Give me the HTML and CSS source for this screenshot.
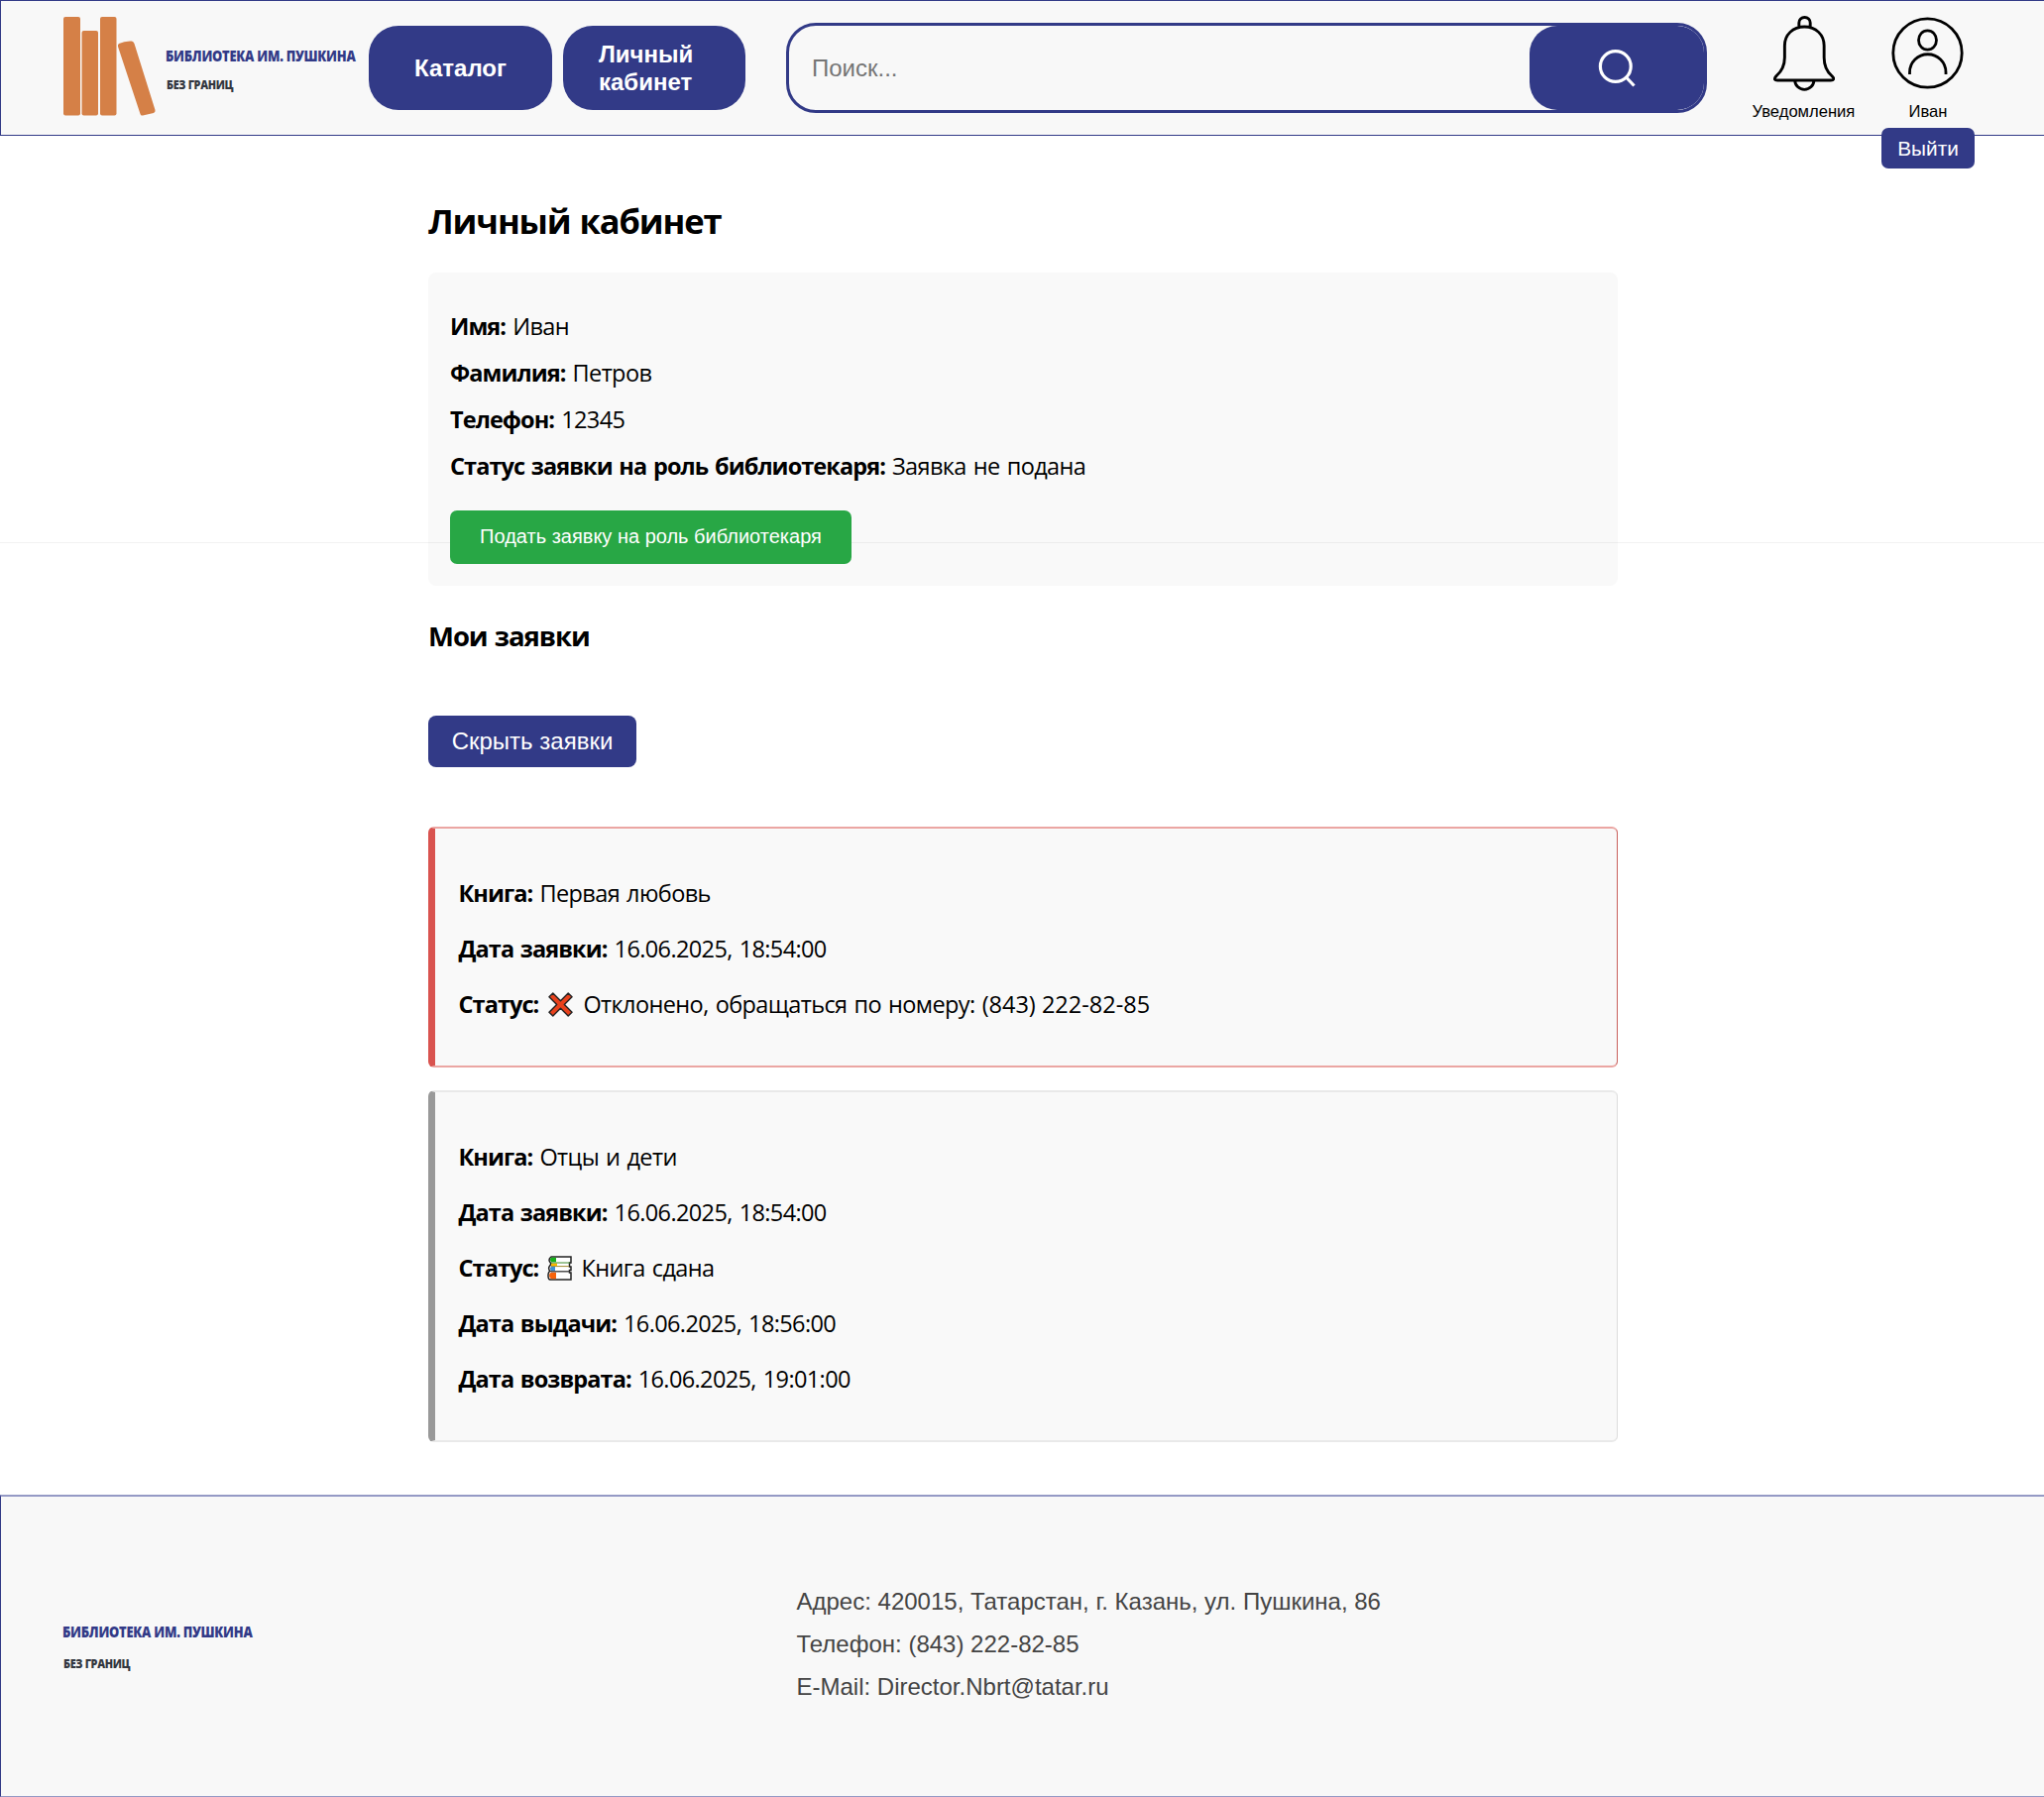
FILE: index.html
```html
<!DOCTYPE html>
<html lang="ru">
<head>
<meta charset="utf-8">
<title>Личный кабинет</title>
<link rel="stylesheet" href="styles.css">
</head>
<body>
<header class="header">
  <svg class="logo-books" width="94" height="102" viewBox="0 0 94 102">
    <g fill="#d58047">
      <rect x="0" y="1" width="17" height="99.500" rx="2"/>
      <rect x="18.500" y="15" width="16.500" height="85.500" rx="2"/>
      <rect x="37" y="1" width="16.500" height="99.500" rx="2"/>
      <path d="M56 28 Q62 25 69 25.500 Q71 26 71.500 28 L92.500 95 Q93 97 91 98 L80 100.500 Q78 101 77.500 99 L55 31 Q54.500 29 56 28Z"/>
    </g>
  </svg>
  <div class="brand">
    <div class="brand-name">БИБЛИОТЕКА ИМ. ПУШКИНА</div>
    <div class="brand-sub">БЕЗ ГРАНИЦ</div>
  </div>
  <nav class="nav">
    <a class="nav-btn">Каталог</a>
    <a class="nav-btn nav-btn-left">Личный<br>кабинет</a>
  </nav>
  <div class="search">
    <span class="search-text">Поиск...</span>
    <button class="search-btn" aria-label="Поиск">
      <svg width="40" height="40" viewBox="0 0 40 40" fill="none" stroke="#fff" stroke-width="3.200"><circle cx="17.800" cy="18" r="15.400"/><path d="M28.500 29 36.500 37.500"/></svg>
    </button>
  </div>
  <div class="user-item bell">
    <svg width="62" height="78" viewBox="0 0 60 78" preserveAspectRatio="none" fill="none" stroke="#000" stroke-width="2.800"><path d="M25 12.500V8a5.500 5.500 0 0 1 11 0v4.500M30.300 12C19 12 11 20 11 31V43C11 51 8 57 3 61.500C0 65 1.500 66 4 66H56C59 66 60 64.500 57 61.500C52 57 49.500 51 49.500 43V31C49.500 20 41.500 12 30.300 12ZM21 66a9.300 9.300 0 0 0 18.600 0"/></svg>
    <span>Уведомления</span>
  </div>
  <div class="user-item user">
    <svg width="74" height="78" viewBox="0 0 74 78" fill="none" stroke="#000" stroke-width="2.800"><circle cx="36.500" cy="38.500" r="34.700"/><ellipse cx="36.500" cy="25.500" rx="9" ry="9.700"/><path d="M18.500 60V58a18 18 0 0 1 36.500 0v2"/></svg>
    <span>Иван</span>
    <button class="logout">Выйти</button>
  </div>
</header>
<main class="main">
  <h1 class="title">Личный кабинет</h1>
  <section class="profile">
    <p class="row"><b>Имя:</b> Иван</p>
    <p class="row"><b>Фамилия:</b> Петров</p>
    <p class="row"><b>Телефон:</b> 12345</p>
    <p class="row"><b>Статус заявки на роль библиотекаря:</b> Заявка не подана</p>
    <button class="apply">Подать заявку на роль библиотекаря</button>
  </section>
  <h2 class="subtitle">Мои заявки</h2>
  <button class="toggle">Скрыть заявки</button>
  <article class="card card-rejected">
    <p class="line"><b>Книга:</b> Первая любовь</p>
    <p class="line"><b>Дата заявки:</b> <time>16.06.2025, 18:54:00</time></p>
    <p class="line"><b>Статус:</b> <svg class="cross" width="25" height="25" viewBox="0 0 26 26"><path d="M1 5 5 1 13 9 21 1 25 5 17 13 25 21 21 25 13 17 5 25 1 21 9 13Z" fill="#e8411c" stroke="#252525" stroke-width="1.500" stroke-linejoin="round"/></svg> Отклонено, обращаться по номеру: <span class="phone">(843) 222-82-85</span></p>
  </article>
  <article class="card">
    <p class="line"><b>Книга:</b> Отцы и дети</p>
    <p class="line"><b>Дата заявки:</b> <time>16.06.2025, 18:54:00</time></p>
    <p class="line"><b>Статус:</b> <svg class="books" width="25" height="25" viewBox="0 0 25 25"><path d="M4 1H24V7H22.500V11H24V14.500H22.500V17H24V24H3Q1 24 1 20Q1 16 3 15.500Q1 14 2 11L4 8Q0 4 4 1Z" fill="#fff" stroke="#222" stroke-width="1.500"/><path d="M9 6.200H4Q2 4 4 1.800H9Z" fill="#16b01b"/><path d="M10 10H4V7.500H10Z" fill="#fcb900"/><path d="M8 15H4Q2 13 4 11H8Z" fill="#3e91d8"/><path d="M9 23.300H4Q2 22 2 20Q2 17 4 16.700H9Z" fill="#f7630c"/><path d="M4 7H23" stroke="#3f8a2a"/><path d="M4 10.600H22" stroke="#a08a30"/><path d="M4 15.800H23" stroke="#333" stroke-width="1.300"/></svg> Книга сдана</p>
    <p class="line"><b>Дата выдачи:</b> <time>16.06.2025, 18:56:00</time></p>
    <p class="line"><b>Дата возврата:</b> <time>16.06.2025, 19:01:00</time></p>
  </article>
</main>
<footer class="footer">
  <div class="brand brand-footer">
    <div class="brand-name">БИБЛИОТЕКА ИМ. ПУШКИНА</div>
    <div class="brand-sub">БЕЗ ГРАНИЦ</div>
  </div>
  <address class="contacts">
    <div>Адрес: 420015, Татарстан, г. Казань, ул. Пушкина, 86</div>
    <div>Телефон: (843) 222-82-85</div>
    <div>E-Mail: Director.Nbrt@tatar.ru</div>
  </address>
</footer>
</body>
</html>
```
FILE: styles.css
```css
* { box-sizing: border-box; }
body {
  position: relative;
  margin: 0;
  height: 1813px;
  display: flex;
  flex-direction: column;
  overflow: hidden;
  background: #fff;
  color: #000;
  font-family: "Open Sans", "Noto Sans", sans-serif;
  font-size: 23.5px;
  letter-spacing: -.6px;
}
/* hairline across the page */
body::before {
  content: "";
  position: absolute;
  top: 547px;
  left: 0;
  right: 0;
  height: 1px;
  background: rgba(0, 0, 0, .05);
}
button { border: 0; padding: 0; color: #fff; font-family: "Liberation Sans", Arial, sans-serif; }
p, h1, h2 { margin: 0; }
b { letter-spacing: -.92px; }
time { letter-spacing: -.62px; }
.phone { letter-spacing: 0; word-spacing: 0; }

.header {
  height: 137px;
  flex: none;
  display: flex;
  background: #f8f8f8;
  border: 1px solid #323a87;
  border-right: 0;
  padding-left: 63px;
  font-family: "Liberation Sans", Arial, sans-serif;
  letter-spacing: 0;
}
.logo-books { margin-top: 15px; flex: none; }
.brand {
  width: 206px;
  flex: none;
  padding: 46px 0 0 9px;
  font-family: "Open Sans", sans-serif;
  font-weight: 800;
  white-space: nowrap;
}
.brand-name,
.brand-sub { width: max-content; transform-origin: 0 50%; }
.brand-name { color: #323a87; font-size: 15.2px; line-height: 18px; letter-spacing: -.3px; transform: scaleX(.85); }
.brand-sub { color: #333740; font-size: 12.5px; line-height: 16px; margin: 13px 0 0 1px; letter-spacing: -.4px; transform: scaleX(.87); }

.nav { display: flex; gap: 11px; margin: 25px 0 0 8px; }
.nav-btn {
  width: 185px;
  height: 85px;
  border-radius: 30px;
  background: #323a87;
  color: #fff;
  font-size: 24px;
  font-weight: 700;
  line-height: 28px;
  display: flex;
  align-items: center;
  justify-content: center;
}
.nav-btn-left { width: 184px; justify-content: flex-start; padding-left: 36px; }

.search {
  width: 929px;
  height: 91px;
  margin: 22px 0 0 41px;
  border: 3px solid #323a87;
  border-radius: 30px;
  display: flex;
  align-items: center;
  justify-content: space-between;
  padding-left: 23px;
  overflow: hidden;
  flex: none;
}
.search-text { color: #757575; font-size: 24px; }
.search-btn {
  width: 177px;
  height: 85px;
  margin-right: -1px;
  border-radius: 28px;
  background: #323a87;
  display: flex;
  align-items: center;
  justify-content: center;
}

.user-item { display: flex; flex: none; flex-direction: column; align-items: center; font-size: 16.6px; line-height: 20px; margin-top: 14px; }
.user-item svg { flex: none; }
.bell { width: 104px; margin-left: 45.5px; }
.user { width: 94px; margin-left: 26.5px; }
.user-item span { margin-top: 10px; }
.logout {
  width: 94px;
  height: 41px;
  flex: none;
  margin-top: 6px;
  border-radius: 7px;
  background: #323a87;
  font-size: 20.8px;
}

.main { width: 1200px; margin-left: 432px; flex: 1; }
.title { font-size: 34.5px; line-height: 48px; margin-top: 62px; font-weight: 700; letter-spacing: -1.1px; word-spacing: 1px; }
.profile {
  height: 316px;
  margin-top: 28px;
  padding: 38px 22px 0;
  background: #f9f9f9;
  border-radius: 8px;
}
.row { line-height: 32px; margin-bottom: 15px; white-space: nowrap; word-spacing: 1.5px; }
.apply {
  position: relative;
  display: block;
  width: 405px;
  height: 54px;
  margin-top: 29px;
  padding-bottom: 2px;
  border-radius: 7px;
  background: #28a745;
  font-size: 20px;
}
.subtitle { font-size: 27.5px; line-height: 38px; margin-top: 32px; letter-spacing: -1.05px; word-spacing: 1px; }
.toggle {
  display: block;
  width: 210px;
  height: 52px;
  margin-top: 61px;
  border-radius: 8px;
  background: #323a87;
  font-size: 24px;
}
.card {
  height: 355px;
  margin-top: 23px;
  padding: 37px 0 0 23.5px;
  border: 2px solid #e9e9e9;
  border-right: 1px solid #ddd;
  border-left: 7px solid #999;
  border-radius: 6px;
  background: #f9f9f9;
}
.card-rejected {
  height: 243px;
  margin-top: 60px;
  border-color: #eba6a3 #c9605c #eba6a3 #d9534f;
}
.line { height: 56px; line-height: 56px; white-space: nowrap; word-spacing: 1.5px; }
.cross { vertical-align: -4px; margin: 0 3px; }
.books { vertical-align: -4px; margin: 0 2px; }

.footer {
  height: 305px;
  flex: none;
  display: flex;
  background: #f8f8f8;
  border: solid #959ac5;
  border-width: 2px 0 1px 1px;
  border-left-color: #323a87;
  padding-left: 62px;
  letter-spacing: 0;
}
.brand-footer { padding: 127px 0 0 0; }
.brand-footer .brand-sub { margin-top: 16px; }
.contacts {
  margin: 84px 0 0 534.5px;
  color: #444;
  font: 24px/43px "Liberation Sans", Arial, sans-serif;
}
```
